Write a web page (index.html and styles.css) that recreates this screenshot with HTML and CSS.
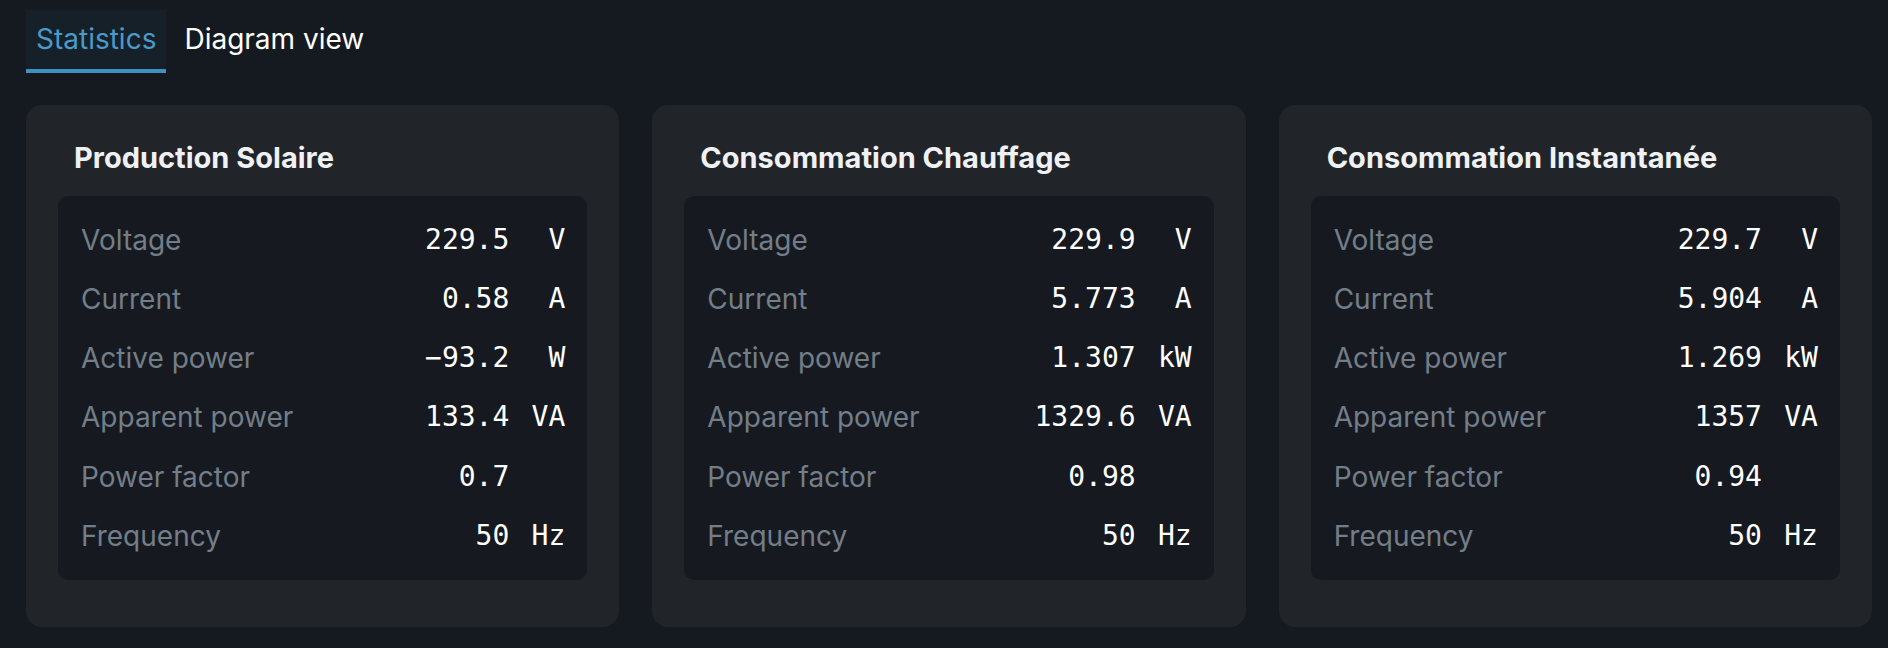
FILE: index.html
```html
<!DOCTYPE html>
<html lang="en">
<head>
<meta charset="utf-8">
<title>Statistics</title>
<link rel="stylesheet" href="styles.css">
</head>
<body>
<div class="page">
  <nav class="tabs">
    <div class="tab tab-active">Statistics</div>
    <div class="tab">Diagram view</div>
  </nav>
  <main class="cards">
    <section class="card">
      <h2 class="card-title">Production Solaire</h2>
      <div class="panel">
        <div class="row"><span class="label">Voltage</span><span class="value">229.5</span><span class="unit">V</span></div>
        <div class="row"><span class="label">Current</span><span class="value">0.58</span><span class="unit">A</span></div>
        <div class="row"><span class="label">Active power</span><span class="value">−93.2</span><span class="unit">W</span></div>
        <div class="row"><span class="label">Apparent power</span><span class="value">133.4</span><span class="unit">VA</span></div>
        <div class="row"><span class="label">Power factor</span><span class="value">0.7</span><span class="unit"></span></div>
        <div class="row"><span class="label">Frequency</span><span class="value">50</span><span class="unit">Hz</span></div>
      </div>
    </section>
    <section class="card">
      <h2 class="card-title">Consommation Chauffage</h2>
      <div class="panel">
        <div class="row"><span class="label">Voltage</span><span class="value">229.9</span><span class="unit">V</span></div>
        <div class="row"><span class="label">Current</span><span class="value">5.773</span><span class="unit">A</span></div>
        <div class="row"><span class="label">Active power</span><span class="value">1.307</span><span class="unit">kW</span></div>
        <div class="row"><span class="label">Apparent power</span><span class="value">1329.6</span><span class="unit">VA</span></div>
        <div class="row"><span class="label">Power factor</span><span class="value">0.98</span><span class="unit"></span></div>
        <div class="row"><span class="label">Frequency</span><span class="value">50</span><span class="unit">Hz</span></div>
      </div>
    </section>
    <section class="card">
      <h2 class="card-title">Consommation Instantanée</h2>
      <div class="panel">
        <div class="row"><span class="label">Voltage</span><span class="value">229.7</span><span class="unit">V</span></div>
        <div class="row"><span class="label">Current</span><span class="value">5.904</span><span class="unit">A</span></div>
        <div class="row"><span class="label">Active power</span><span class="value">1.269</span><span class="unit">kW</span></div>
        <div class="row"><span class="label">Apparent power</span><span class="value">1357</span><span class="unit">VA</span></div>
        <div class="row"><span class="label">Power factor</span><span class="value">0.94</span><span class="unit"></span></div>
        <div class="row"><span class="label">Frequency</span><span class="value">50</span><span class="unit">Hz</span></div>
      </div>
    </section>
  </main>
</div>
</body>
</html>
```

FILE: styles.css
```css
* { box-sizing: border-box; }

html, body {
  margin: 0;
  padding: 0;
  background: #151a20;
  font-family: Inter, "Noto Sans", sans-serif;
  color: #f0f2f4;
}

.page {
  padding: 10px 16px 0 26px;
}

.tabs {
  display: flex;
  gap: 8px;
}

.tab {
  font-size: 28px;
  line-height: 34px;
  padding: 12px 10px 13px;
  border-bottom: 4px solid transparent;
  color: #ffffff;
}

.tab-active {
  background: #162028;
  color: #4a9acb;
  border-bottom-color: #3f91c2;
}

.cards {
  margin-top: 32px;
  display: grid;
  grid-template-columns: repeat(3, 1fr);
  gap: 33px;
}

.card {
  background: #212529;
  border-radius: 16px;
  padding: 36px 32px 47px;
}

.card-title {
  margin: 0 16px 21px;
  font-size: 29px;
  line-height: 34px;
  font-weight: 700;
  color: #eff1f4;
}

.panel {
  background: #161a20;
  border-radius: 10px;
  padding: 14px 22px 14px 23px;
}

.row {
  display: flex;
  align-items: center;
  height: 59.25px;
}

.label {
  flex: 1;
  font-size: 28px;
  line-height: 34px;
  color: #737e89;
}

.value, .unit {
  font-family: "DejaVu Sans Mono", "Liberation Mono", monospace;
  font-size: 28px;
  line-height: 34px;
  color: #ffffff;
  text-align: right;
}

.unit {
  width: 34px;
  margin-left: 22px;
}
```
